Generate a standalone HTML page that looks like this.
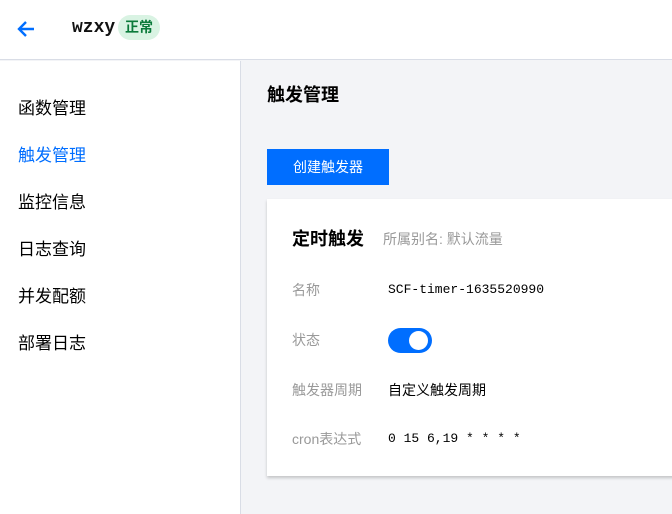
<!DOCTYPE html><html><head><meta charset="utf-8"><style>
*{margin:0;padding:0;box-sizing:border-box}
body{width:672px;height:514px;overflow:hidden;background:#f3f4f7;font-family:"Liberation Sans","Noto Sans CJK SC",sans-serif;position:relative}
.hdr{position:absolute;left:0;top:0;width:672px;height:60px;background:#fff;border-bottom:1px solid #d9dde6}
.side{position:absolute;left:0;top:61px;width:241px;height:453px;background:#fff;border-right:1px solid #d9dde6}
.nav{position:absolute;left:18px;font-size:17px;color:#000;line-height:20px}
.a{position:absolute}
.lbl{position:absolute;left:292px;font-size:14px;color:#999;line-height:16px}
.val{position:absolute;left:388px;font-size:14px;color:#000;line-height:16px}
.mono{font-family:"Liberation Mono","DejaVu Sans Mono",monospace;font-size:13px}
</style></head><body>
<div class="hdr">
<svg class="a" style="left:16px;top:19px" width="20" height="20" viewBox="0 0 20 20"><path d="M18 10H3M10 3L3 10l7 7" stroke="#006eff" stroke-width="2.4" fill="none"/></svg>
<div class="a mono" style="left:72px;top:18px;font-size:18px;font-weight:bold;color:#111">wzxy</div>
<div class="a" style="left:118px;top:15px;width:42px;height:25px;border-radius:13px;background:#d9f3e3;color:#0a7a3a;font-size:14px;font-weight:bold;line-height:25px;text-align:center">正常</div>
</div>
<div class="side">
<div class="nav" style="top:38px">函数管理</div>
<div class="nav" style="top:85px;color:#006eff">触发管理</div>
<div class="nav" style="top:132px">监控信息</div>
<div class="nav" style="top:179px">日志查询</div>
<div class="nav" style="top:226px">并发配额</div>
<div class="nav" style="top:273px">部署日志</div>
</div>
<div class="a" style="left:267px;top:81px;font-size:18px;font-weight:bold;color:#000">触发管理</div>
<div class="a" style="left:267px;top:149px;width:122px;height:36px;background:#006eff;color:#fff;font-size:14px;line-height:36px;text-align:center">创建触发器</div>
<div class="a" style="left:267px;top:199px;width:420px;height:277px;background:#fff;box-shadow:0 2px 3px rgba(0,0,0,.2)"></div>
<div class="a" style="left:292px;top:225px;font-size:18px;font-weight:bold;color:#000">定时触发</div>
<div class="a" style="left:383px;top:229px;font-size:14px;color:#999">所属别名: 默认流量</div>
<div class="lbl" style="top:282px">名称</div><div class="val mono" style="top:282px">SCF-timer-1635520990</div>
<div class="lbl" style="top:332px">状态</div>
<div class="a" style="left:388px;top:328px;width:44px;height:25px;border-radius:13px;background:#006eff"><div class="a" style="left:21px;top:3px;width:19px;height:19px;border-radius:50%;background:#fff"></div></div>
<div class="lbl" style="top:382px">触发器周期</div><div class="val" style="top:382px">自定义触发周期</div>
<div class="lbl" style="top:431px">cron表达式</div><div class="val mono" style="top:431px">0 15 6,19 * * * *</div>
</body></html>
